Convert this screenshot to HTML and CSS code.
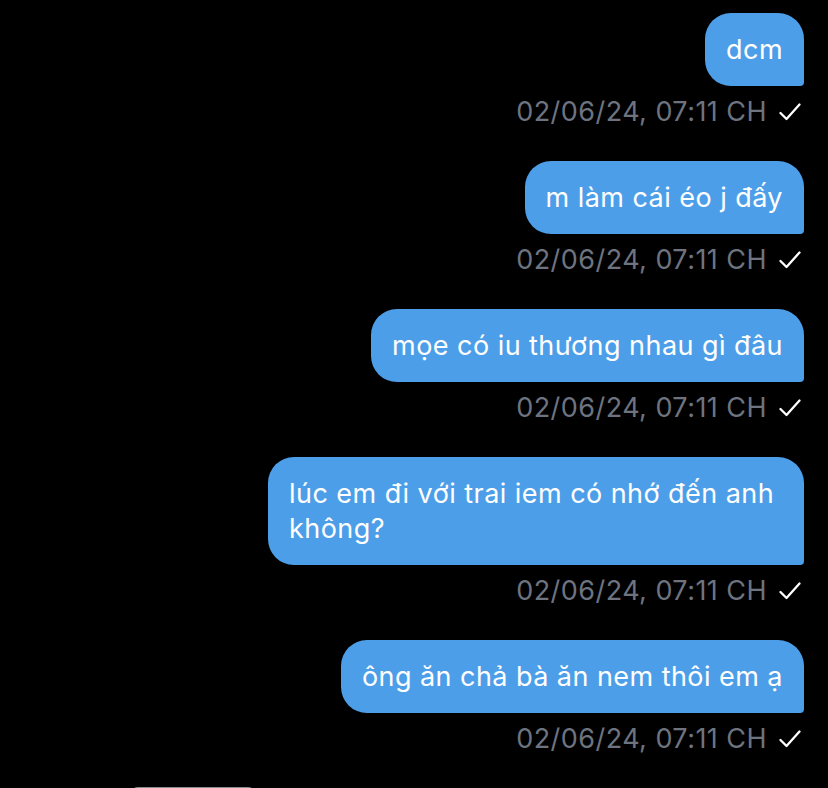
FILE: index.html
```html
<!DOCTYPE html>
<html lang="vi">
<head>
    <meta charset="UTF-8">
    <meta name="viewport" content="width=device-width, initial-scale=1.0">
    <title>Tin nhắn</title>
    <link rel="stylesheet" href="styles.css">
</head>
<body>

<div class="chat">
    <div class="msg">
        <div class="bubble">dcm</div>
        <div class="meta">
            <span class="time">02/06/24, 07:11 CH</span>
            <svg class="tick" width="22" height="18" viewBox="0 0 22 18"><path d="M1.5 10 L7.5 16 L20.5 1.5" fill="none" stroke="#fff" stroke-width="2.3" stroke-linecap="round" stroke-linejoin="round"/></svg>
        </div>
    </div>
    <div class="msg">
        <div class="bubble">m làm cái éo j đấy</div>
        <div class="meta">
            <span class="time">02/06/24, 07:11 CH</span>
            <svg class="tick" width="22" height="18" viewBox="0 0 22 18"><path d="M1.5 10 L7.5 16 L20.5 1.5" fill="none" stroke="#fff" stroke-width="2.3" stroke-linecap="round" stroke-linejoin="round"/></svg>
        </div>
    </div>
    <div class="msg">
        <div class="bubble">mọe có iu thương nhau gì đâu</div>
        <div class="meta">
            <span class="time">02/06/24, 07:11 CH</span>
            <svg class="tick" width="22" height="18" viewBox="0 0 22 18"><path d="M1.5 10 L7.5 16 L20.5 1.5" fill="none" stroke="#fff" stroke-width="2.3" stroke-linecap="round" stroke-linejoin="round"/></svg>
        </div>
    </div>
    <div class="msg">
        <div class="bubble">lúc em đi với trai iem có nhớ đến anh không?</div>
        <div class="meta">
            <span class="time">02/06/24, 07:11 CH</span>
            <svg class="tick" width="22" height="18" viewBox="0 0 22 18"><path d="M1.5 10 L7.5 16 L20.5 1.5" fill="none" stroke="#fff" stroke-width="2.3" stroke-linecap="round" stroke-linejoin="round"/></svg>
        </div>
    </div>
    <div class="msg">
        <div class="bubble">ông ăn chả bà ăn nem thôi em ạ</div>
        <div class="meta">
            <span class="time">02/06/24, 07:11 CH</span>
            <svg class="tick" width="22" height="18" viewBox="0 0 22 18"><path d="M1.5 10 L7.5 16 L20.5 1.5" fill="none" stroke="#fff" stroke-width="2.3" stroke-linecap="round" stroke-linejoin="round"/></svg>
        </div>
    </div>
    <div class="peek"></div>
</div>

</body>
</html>
```

FILE: styles.css
```css
html, body {
    margin: 0;
    background: #000;
}
body {
    font-family: Inter, "Noto Sans", sans-serif;
    height: 788px;
    overflow: hidden;
}
.chat {
    padding: 13px 24px 0 0;
    display: flex;
    flex-direction: column;
}
.msg {
    display: flex;
    flex-direction: column;
    align-items: flex-end;
    margin-bottom: 34px;
}
.bubble {
    background: #4d9ee8;
    color: #fff;
    font-size: 27px;
    letter-spacing: 0.45px;
    line-height: 35px;
    padding: 19px 21px;
    max-width: 494px;
    border-radius: 26px 26px 4px 26px;
}
.meta {
    display: flex;
    align-items: center;
    gap: 12px;
    margin-top: 11px;
    height: 30px;
}
.time {
    color: #6d7480;
    font-size: 27px;
    letter-spacing: 0.45px;
    line-height: 30px;
}
.tick {
    display: block;
    margin-right: 3px;
}
.peek {
    margin: -1px 0 0 130px;
    width: 126px;
    height: 20px;
    border-radius: 8px;
    background: #8a8a8e;
}
```
